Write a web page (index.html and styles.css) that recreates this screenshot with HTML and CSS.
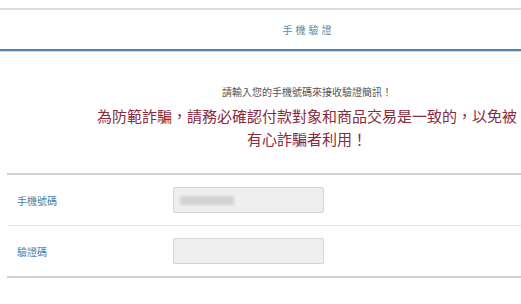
FILE: index.html
```html
<!DOCTYPE html>
<html lang="zh-Hant">
<head>
  <meta charset="UTF-8">
  <title>手機驗證</title>
  <link rel="stylesheet" href="styles.css">
</head>
<body>
  <div id="page">
    <div id="verify-header">
      <h2>手機驗證</h2>
    </div>
    <div id="notice">
      <p class="notice-tip">請輸入您的手機號碼來接收驗證簡訊！</p>
      <p class="notice-warn">為防範詐騙，請務必確認付款對象和商品交易是一致的，以免被有心詐騙者利用！</p>
    </div>
    <div id="verify-form">
      <div class="form-row">
        <label class="form-label">手機號碼</label>
        <div class="form-input filled"><span class="masked"></span></div>
      </div>
      <div class="form-row">
        <label class="form-label">驗證碼</label>
        <div class="form-input"></div>
      </div>
    </div>
  </div>
</body>
</html>
```

FILE: styles.css
```css
body {
  margin: 0;
  background: #fff;
  font-family: 'Noto Sans CJK TC', 'Noto Sans CJK SC', sans-serif;
  overflow: hidden;
}
#page {
  padding-top: 8px;
}
/* 頁面內容中心偏右，左側留 93px */
#verify-header {
  border-top: 2px solid #dcdcdc;
  border-bottom: 2px solid #4f84ad;
  box-shadow: 0 1px 0 #c9dbe8;
  height: 39px;
  padding-left: 93px;
  display: flex;
  justify-content: center;
  align-items: center;
}
#verify-header h2 {
  margin: 0;
  font-size: 10px;
  font-weight: normal;
  letter-spacing: 3px;
  color: #5b8bab;
  padding-left: 3px;
}
#notice {
  text-align: center;
  padding: 34px 0 0 93px;
}
.notice-tip {
  margin: 0;
  font-size: 10px;
  line-height: 14px;
  color: #555;
}
.notice-warn {
  margin: 5px 0 0;
  font-size: 15px;
  line-height: 23px;
  color: #8a2a3d;
}
#verify-form {
  margin: 23px 0 0 7px;
  border-top: 2px solid #d2d2d2;
  border-bottom: 2px solid #d2d2d2;
}
.form-row {
  display: flex;
  align-items: center;
  height: 50px;
}
.form-row + .form-row {
  border-top: 1px solid #e8e8e8;
}
.form-label {
  width: 156px;
  padding-left: 10px;
  font-size: 10px;
  color: #4f7fa0;
}
.form-input {
  width: 149px;
  height: 24px;
  background: #efefef;
  border: 1px solid #d4d4d4;
  border-radius: 2px;
  display: flex;
  align-items: center;
}
.masked {
  display: block;
  width: 54px;
  height: 9px;
  margin-left: 6px;
  background: #d2d2d2;
  filter: blur(1.5px);
}
```
